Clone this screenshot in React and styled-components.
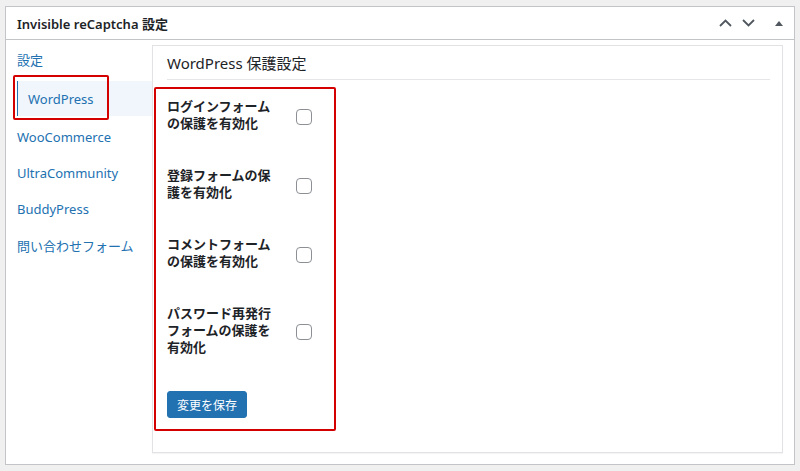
import React from "react";
import styled, { createGlobalStyle } from "styled-components";

const GlobalStyle = createGlobalStyle`
  html, body {
    margin: 0;
    padding: 0;
    background: #f0f0f1;
  }
  body {
    font-family: "Noto Sans", "Noto Sans CJK JP", sans-serif;
    color: #1d2327;
    font-size: 13px;
  }
`;

const Page = styled.div`
  padding: 6px 5px 6px 5px;
  height: 471px;
  box-sizing: border-box;
`;

const Postbox = styled.div`
  height: 100%;
  box-sizing: border-box;
  background: #fff;
  border: 1px solid #c3c4c7;
  display: flex;
  flex-direction: column;
`;

const Header = styled.div`
  height: 32px;
  flex: none;
  display: flex;
  align-items: center;
  justify-content: space-between;
  padding: 0 10px 0 11px;
  border-bottom: 1px solid #c3c4c7;
`;

const HeaderTitle = styled.h2`
  margin: 0;
  font-size: 13px;
  font-weight: 600;
  color: #1d2327;
`;

const Handles = styled.div`
  display: flex;
  align-items: center;
  gap: 9px;
`;

const HandleButton = styled.span`
  display: flex;
  align-items: center;
  justify-content: center;
  width: ${(p) => p.$w || 14}px;
  height: 20px;
  margin-left: ${(p) => p.$gap || 0}px;
  color: #50575e;
`;

const Body = styled.div`
  flex: 1;
  display: flex;
  min-height: 0;
`;

const Sidebar = styled.ul`
  width: 146px;
  flex: none;
  margin: 0;
  padding: 1px 0 0 0;
  list-style: none;
`;

const NavItem = styled.li`
  position: relative;
  height: ${(p) => (p.$active ? 35 : 36)}px;
  display: flex;
  align-items: center;
  margin: ${(p) => (p.$active ? "4px 0 3px 11px" : "0")};
  padding-left: ${(p) => (p.$active ? "10px" : "11px")};
  background: ${(p) => (p.$active ? "#f0f6fc" : "transparent")};
  border-left: ${(p) => (p.$active ? "1px solid #2271b1" : "none")};
  color: #2271b1;
  font-size: 13px;
  white-space: nowrap;
`;

const NavMark = styled.span`
  position: absolute;
  left: -5px;
  top: -6px;
  width: 96px;
  height: 45px;
  box-sizing: border-box;
  border: 2px solid #d40000;
  border-radius: 2px;
`;

const Panel = styled.section`
  flex: 1;
  margin: 5px 11px 11px 0;
  background: #fff;
  border: 1px solid #e2e2e4;
  box-shadow: 0 1px 1px rgba(0, 0, 0, 0.04);
  padding: 7px 12px 0 14px;
  box-sizing: border-box;
`;

const PanelTitle = styled.h3`
  margin: 0;
  font-size: 15px;
  font-weight: 400;
  line-height: 21px;
  padding-bottom: 5px;
  border-bottom: 1px solid #e6e6e8;
  color: #1d2327;
`;

const FormBox = styled.div`
  margin: 7px 0 0 -13px;
  width: 182px;
  height: 344px;
  box-sizing: border-box;
  border: 2px solid #d40000;
  border-radius: 2px;
  padding: 9px 0 0 11px;
`;

const Row = styled.div`
  display: flex;
  align-items: center;
  margin-bottom: ${(p) => (p.$last ? 0 : 35)}px;
`;

const Label = styled.label`
  width: 108px;
  font-size: 13px;
  font-weight: 700;
  line-height: 17px;
  color: #1d2327;
  margin-right: 21px;
`;

const Checkbox = styled.span`
  width: 16px;
  height: 16px;
  box-sizing: border-box;
  border: 1px solid #8c8f94;
  border-radius: 4px;
  background: #fff;
  margin-top: 3px;
`;

const SaveButton = styled.button`
  margin-top: 35px;
  height: 27px;
  padding: 0 9px;
  background: #2271b1;
  border: 1px solid #2271b1;
  border-radius: 3px;
  color: #fff;
  font-family: inherit;
  font-size: 12px;
  cursor: pointer;
`;

const navItems = [
  "設定",
  "WordPress",
  "WooCommerce",
  "UltraCommunity",
  "BuddyPress",
  "問い合わせフォーム",
];

const rows = [
  "ログインフォームの保護を有効化",
  "登録フォームの保護を有効化",
  "コメントフォームの保護を有効化",
  "パスワード再発行フォームの保護を有効化",
];

export default function App() {
  return (
    <>
      <GlobalStyle />
      <Page>
        <Postbox>
          <Header>
            <HeaderTitle>Invisible reCaptcha 設定</HeaderTitle>
            <Handles>
              <HandleButton>
                <svg width="13" height="8" viewBox="0 0 13 8">
                  <path d="M1 7 L6.5 1.5 L12 7" fill="none" stroke="currentColor" strokeWidth="1.8" />
                </svg>
              </HandleButton>
              <HandleButton>
                <svg width="13" height="8" viewBox="0 0 13 8">
                  <path d="M1 1 L6.5 6.5 L12 1" fill="none" stroke="currentColor" strokeWidth="1.8" />
                </svg>
              </HandleButton>
              <HandleButton $gap={10} $w={10}>
                <svg width="8" height="5" viewBox="0 0 8 5">
                  <path d="M0 5 L4 0 L8 5 Z" fill="currentColor" />
                </svg>
              </HandleButton>
            </Handles>
          </Header>
          <Body>
            <Sidebar>
              {navItems.map((item) => (
                <NavItem key={item} $active={item === "WordPress"}>
                  {item}
                  {item === "WordPress" && <NavMark />}
                </NavItem>
              ))}
            </Sidebar>
            <Panel>
              <PanelTitle>WordPress 保護設定</PanelTitle>
              <FormBox>
                {rows.map((r, i) => (
                  <Row key={r} $last={i === rows.length - 1}>
                    <Label>{r}</Label>
                    <Checkbox />
                  </Row>
                ))}
                <SaveButton>変更を保存</SaveButton>
              </FormBox>
            </Panel>
          </Body>
        </Postbox>
      </Page>
    </>
  );
}
